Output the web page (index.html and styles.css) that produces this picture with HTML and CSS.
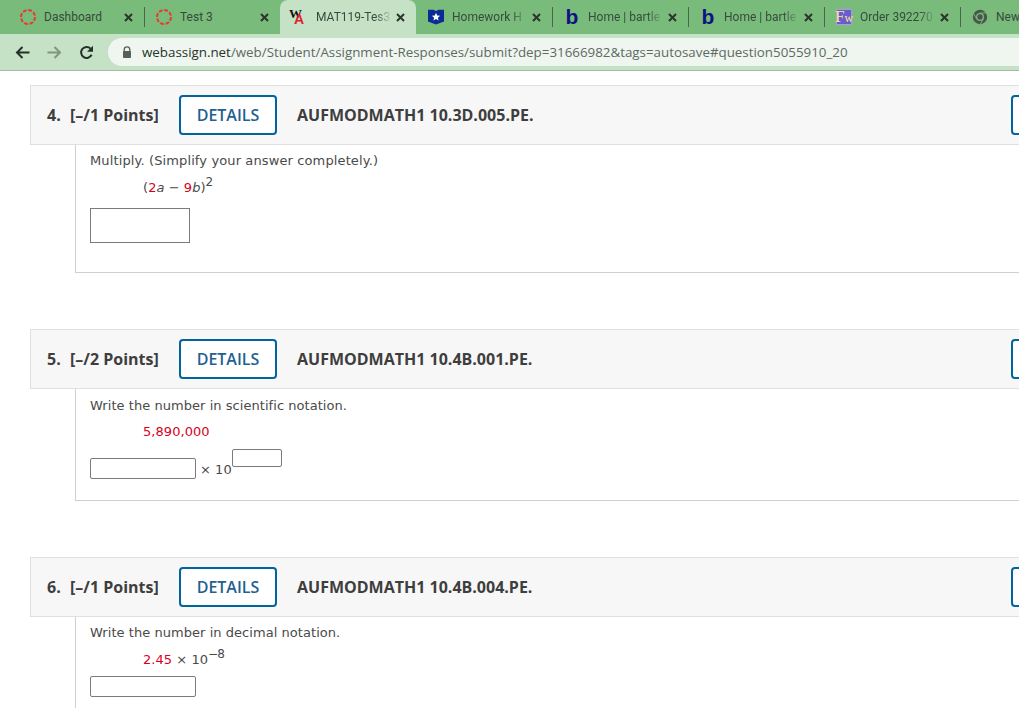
FILE: index.html
```html
<!DOCTYPE html>
<html lang="en">
<head>
<meta charset="utf-8">
<title>MAT119-Test3</title>
<link rel="stylesheet" href="styles.css">
</head>
<body>
<div class="chrome">
  <div class="tabstrip">
    <div class="tab">
      <svg class="fav" viewBox="0 0 16 16"><circle cx="8" cy="8" r="7" fill="none" stroke="#e63b32" stroke-width="2" stroke-dasharray="3.8 1.7"/></svg>
      <span class="tab-title">Dashboard</span>
      <svg class="tab-x" viewBox="0 0 9 9"><path d="M1 1l7 7M8 1L1 8" stroke="#2b352e" stroke-width="2" fill="none"/></svg>
    </div>
    <div class="tab sep">
      <svg class="fav" viewBox="0 0 16 16"><circle cx="8" cy="8" r="7" fill="none" stroke="#e63b32" stroke-width="2" stroke-dasharray="3.8 1.7"/></svg>
      <span class="tab-title">Test 3</span>
      <svg class="tab-x" viewBox="0 0 9 9"><path d="M1 1l7 7M8 1L1 8" stroke="#2b352e" stroke-width="2" fill="none"/></svg>
    </div>
    <div class="tab active">
      <span class="fav wa"><span class="wa-w">W</span><span class="wa-a">A</span></span>
      <span class="tab-title fade">MAT119-Tes3</span>
      <svg class="tab-x" viewBox="0 0 9 9"><path d="M1 1l7 7M8 1L1 8" stroke="#2b352e" stroke-width="2" fill="none"/></svg>
    </div>
    <div class="tab">
      <svg class="fav" viewBox="0 0 16 16"><path d="M0 .8h5.500L8 2l2.500-1.200H16V12.500L8 15.500 0 12.500z" fill="#0b2a94"/><path d="M8 3.800l1.200 2.700 2.900.3-2.200 1.900.7 2.800L8 10l-2.600 1.500.7-2.800-2.200-1.900 2.900-.3z" fill="#fff"/></svg>
      <span class="tab-title fade">Homework H</span>
      <svg class="tab-x" viewBox="0 0 9 9"><path d="M1 1l7 7M8 1L1 8" stroke="#2b352e" stroke-width="2" fill="none"/></svg>
    </div>
    <div class="tab sep">
      <span class="fav blogo">b</span>
      <span class="tab-title fade">Home | bartle</span>
      <svg class="tab-x" viewBox="0 0 9 9"><path d="M1 1l7 7M8 1L1 8" stroke="#2b352e" stroke-width="2" fill="none"/></svg>
    </div>
    <div class="tab sep">
      <span class="fav blogo">b</span>
      <span class="tab-title fade">Home | bartle</span>
      <svg class="tab-x" viewBox="0 0 9 9"><path d="M1 1l7 7M8 1L1 8" stroke="#2b352e" stroke-width="2" fill="none"/></svg>
    </div>
    <div class="tab sep">
      <span class="fav fw"><span class="fw-f">F</span><span class="fw-w">w</span></span>
      <span class="tab-title fade">Order 392270</span>
      <svg class="tab-x" viewBox="0 0 9 9"><path d="M1 1l7 7M8 1L1 8" stroke="#2b352e" stroke-width="2" fill="none"/></svg>
    </div>
    <div class="tab sep">
      <svg class="fav" viewBox="0 0 16 16"><circle cx="8" cy="8" r="7.200" fill="#4a564c"/><circle cx="8" cy="8" r="4" fill="#78bb7b"/><circle cx="8" cy="8" r="2.700" fill="#4a564c"/><path d="M8 4h6.500M4.600 9.900L1.500 4.400M11.400 9.900l-3.300 5.500" stroke="#78bb7b" stroke-width=".9" fill="none"/></svg>
      <span class="tab-title">New</span>
    </div>
  </div>
  <div class="toolbar">
    <svg class="nav" viewBox="0 0 15 15"><path d="M14.500 7.500H2M7.500 2L2 7.500 7.500 13" fill="none" stroke="#26302a" stroke-width="2"/></svg>
    <svg class="nav" viewBox="0 0 15 15"><path d="M.5 7.500H13M7.500 2L13 7.500 7.500 13" fill="none" stroke="#7f9682" stroke-width="2"/></svg>
    <svg class="nav" viewBox="0 0 15 15"><path d="M12.600 9.800A5.500 5.500 0 1 1 11.600 3.600" fill="none" stroke="#26302a" stroke-width="2"/><path d="M14 .8v6H8z" fill="#26302a"/></svg>
    <div class="omnibox">
      <svg class="lock" viewBox="0 0 10 13"><path d="M2.200 5.500V3.700a2.800 2.800 0 0 1 5.600 0v1.800" fill="none" stroke="#55605a" stroke-width="1.300"/><rect x="1" y="5" width="8" height="7" rx=".8" fill="#55605a"/></svg>
      <span class="url"><span class="host">webassign.net</span>/web/Student/Assignment-Responses/submit?dep=31666982&amp;tags=autosave#question5055910_20</span>
    </div>
  </div>
</div>

<main class="page">
  <section class="question">
    <header class="q-head">
      <span class="q-num">4.</span><span class="q-points">[–/1 Points]</span>
      <button class="btn">DETAILS</button>
      <span class="q-code">AUFMODMATH1 10.3D.005.PE.</span>
      <button class="btn btn-end" aria-label="Open"></button>
    </header>
    <div class="q-body q-body-4">
      <p class="prompt prompt-tight">Multiply. (Simplify your answer completely.)</p>
      <p class="expr expr-4">(<span class="red">2</span><i>a</i> − <span class="red">9</span><i>b</i>)<sup>2</sup></p>
      <input class="answer answer-tall" type="text" aria-label="answer">
    </div>
  </section>

  <section class="question">
    <header class="q-head">
      <span class="q-num">5.</span><span class="q-points">[–/2 Points]</span>
      <button class="btn">DETAILS</button>
      <span class="q-code">AUFMODMATH1 10.4B.001.PE.</span>
      <button class="btn btn-end" aria-label="Open"></button>
    </header>
    <div class="q-body q-body-5">
      <p class="prompt">Write the number in scientific notation.</p>
      <p class="expr red">5,890,000</p>
      <div class="sci">
        <input class="answer answer-wide" type="text" aria-label="coefficient">
        <span class="times">× 10</span>
        <input class="answer answer-exp" type="text" aria-label="exponent">
      </div>
    </div>
  </section>

  <section class="question">
    <header class="q-head">
      <span class="q-num">6.</span><span class="q-points">[–/1 Points]</span>
      <button class="btn">DETAILS</button>
      <span class="q-code">AUFMODMATH1 10.4B.004.PE.</span>
      <button class="btn btn-end" aria-label="Open"></button>
    </header>
    <div class="q-body q-body-6">
      <p class="prompt">Write the number in decimal notation.</p>
      <p class="expr expr-6"><span class="red">2.45</span> × 10<sup>−8</sup></p>
      <input class="answer answer-wide" type="text" aria-label="answer">
    </div>
  </section>
</main>
</body>
</html>
```
FILE: styles.css
```css
* { box-sizing: border-box; }
html, body { margin: 0; padding: 0; }
html { height: 708px; overflow: hidden; }
body {
  width: 1019px;
  height: 708px;
  overflow: hidden;
  background: #fff;
  font-family: "DejaVu Sans", sans-serif;
  color: #4a4a4a;
}

/* Browser chrome */
.chrome { width: 1019px; }
.tabstrip {
  display: flex;
  height: 34px;
  padding-left: 8px;
  background: #78bb7b;
  overflow: hidden;
}
.tab {
  flex: none;
  width: 136px;
  height: 34px;
  display: flex;
  align-items: center;
  padding: 0 11px 0 12px;
  position: relative;
  font-family: Roboto, sans-serif;
  font-size: 12px;
  color: #384a3c;
}
.tab:last-child { width: 59px; padding-right: 0; }
.tab.sep::before {
  content: "";
  position: absolute;
  left: 0;
  top: 7px;
  height: 20px;
  width: 1px;
  background: #47664b;
}
.tab.active {
  background: #c5e1c6;
  border-radius: 8px 8px 0 0;
}
.fav { flex: none; width: 16px; height: 16px; display: block; }
.tab-title {
  flex: 1;
  min-width: 0;
  margin-left: 8px;
  white-space: nowrap;
  overflow: hidden;
}
.tab-title.fade {
  -webkit-mask-image: linear-gradient(to right, #000 78%, transparent 100%);
  mask-image: linear-gradient(to right, #000 78%, transparent 100%);
}
.tab-x { flex: none; width: 9px; height: 9px; margin-left: 4px; }
.wa { position: relative; font-weight: 700; }
.wa-w {
  position: absolute;
  left: -3px;
  top: -2px;
  font-family: "Liberation Serif", serif;
  font-size: 13px;
  line-height: 14px;
  color: #111;
}
.wa-a {
  position: absolute;
  left: 2px;
  top: 3px;
  font-family: "Liberation Sans", sans-serif;
  font-size: 14px;
  line-height: 14px;
  color: #e0202a;
}
.blogo {
  font-family: "Liberation Sans", sans-serif;
  font-weight: 700;
  font-size: 21px;
  line-height: 15px;
  color: #0d1480;
  text-align: center;
}
.fw {
  display: flex;
  align-items: flex-end;
  justify-content: center;
  background: #6a5ccd;
  border: 1px solid #a99be0;
  color: #f6e88a;
  font-family: "Liberation Serif", serif;
  line-height: 14px;
}
.fw-f { font-size: 17px; line-height: 14px; }
.fw-w { font-size: 12px; line-height: 12px; }
.toolbar {
  height: 37px;
  display: flex;
  align-items: center;
  padding-left: 15px;
  background: #c5e1c6;
  border-bottom: 1px solid #a5bca7;
}
.nav { flex: none; width: 15px; height: 15px; margin-right: 17px; }
.omnibox {
  flex: 1;
  height: 28px;
  margin-left: -3px;
  display: flex;
  align-items: center;
  padding-left: 14px;
  background: #eff6f0;
  border-radius: 14px 0 0 14px;
}
.lock { flex: none; width: 10px; height: 13px; margin-right: 10px; }
.url {
  font-family: "Open Sans", sans-serif;
  font-size: 13.35px;
  color: #5d6a62;
  white-space: nowrap;
}
.host { color: #27332b; }

/* Page */
.page {
  width: 1120px;
  padding: 14px 0 0 30px;
}
.question { margin-bottom: 56px; }
.q-head {
  display: flex;
  align-items: center;
  height: 60px;
  padding: 0 10px 0 16px;
  background: #f7f7f7;
  border: 1px solid #e0e0e0;
  font-family: "Open Sans", sans-serif;
  font-weight: 700;
  font-size: 16px;
  color: #3e3e3e;
}
.q-num { width: 23px; }
.q-points { width: 109px; }
.btn {
  flex: none;
  width: 98px;
  height: 40px;
  padding: 0;
  background: #fff;
  border: 2px solid #00659c;
  border-radius: 4px;
  font-family: "Open Sans", sans-serif;
  font-size: 16px;
  font-weight: 600;
  color: #1f6190;
}
.q-code { flex: 1; margin-left: 20px; }
.q-body {
  margin-left: 45px;
  padding-left: 14px;
  border-left: 1px solid #cfcfcf;
  border-bottom: 1px solid #cfcfcf;
  font-size: 13px;
  letter-spacing: .05px;
}
.q-body-4 { height: 128px; padding-top: 7px; }
.q-body-5 { height: 112px; padding-top: 8px; }
.q-body-6 { height: 92px; padding-top: 7px; border-bottom: 0; }
.prompt { margin: 0; line-height: 17px; }
.prompt-tight { letter-spacing: .12px; }
.expr { margin: 9px 0 0 53px; line-height: 17px; }
.expr-4 { margin-top: 10px; margin-bottom: 12px; }
.expr-6 { margin-top: 10px; margin-bottom: 8px; }
.expr sup { font-size: 12px; line-height: 0; letter-spacing: -1px; vertical-align: 6px; }
.red { color: #d9001b; }
.answer {
  display: block;
  margin: 0;
  padding: 0;
  background: #fff;
  border: 1px solid #7b7b7b;
  border-radius: 2px;
}
.answer-tall { width: 100px; height: 35px; border-radius: 0; }
.answer-wide { width: 106px; height: 21px; }
.answer-exp { width: 50px; height: 18px; margin-bottom: 12px; }
.q-body-5 .expr { margin-bottom: 9px; }
.sci { display: flex; align-items: flex-end; }
.times { margin-left: 4px; line-height: 19px; }
```
